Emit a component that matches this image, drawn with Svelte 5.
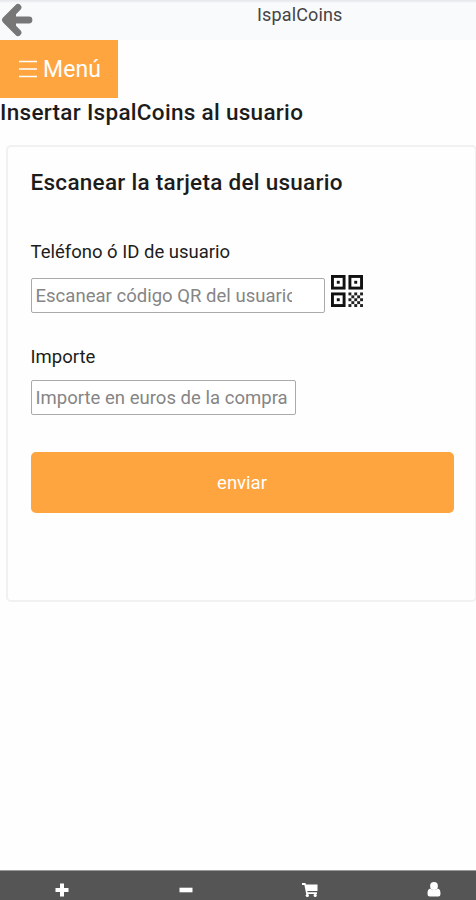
<script>
  const checks = [];
  for (let y = 0; y < 5; y++) {
    for (let x = 0; x < 5; x++) {
      if ((x + y) % 2 === 0) checks.push({ x: 18 + x * 3, y: 18 + y * 3 });
    }
  }
  const finders = [[0, 0], [18, 0], [0, 18]];
</script>

<div class="screen">
  <header>
    <svg class="back" width="34" height="40" viewBox="0 0 34 40" aria-label="Volver">
      <path d="M18 7.3 5.5 20 18 32.7M8 20H29" fill="none" stroke="#777" stroke-width="6.8" stroke-linecap="round" stroke-linejoin="round" />
      <path d="M4 20 16 8v24z" fill="#777" />
    </svg>
    <span class="brand">IspalCoins</span>
  </header>

  <button class="menu">
    <svg width="18" height="18" viewBox="0 0 18 18" aria-hidden="true">
      <path d="M0 1.5h18M0 9h18M0 16.5h18" stroke="#fff" stroke-width="1.7" />
    </svg>
    <span>Menú</span>
  </button>

  <h1>Insertar IspalCoins al usuario</h1>

  <main class="card">
    <h2>Escanear la tarjeta del usuario</h2>
    <label class="user" for="user">Teléfono ó ID de usuario</label>
    <div class="row">
      <input id="user" class="scan" placeholder="Escanear código QR del usuario" />
      <svg class="qr" width="32" height="32" viewBox="0 0 33 33" aria-label="Código QR">
        {#each finders as [x, y]}
          <rect x={x + 1.5} y={y + 1.5} width="12" height="12" fill="none" stroke="#111" stroke-width="3" />
          <rect x={x + 6} y={y + 6} width="3" height="3" fill="#111" />
        {/each}
        {#each checks as c}
          <rect x={c.x} y={c.y} width="3" height="3" fill="#222" />
        {/each}
      </svg>
    </div>
    <label class="amount" for="amount">Importe</label>
    <input id="amount" class="euros" placeholder="Importe en euros de la compra" />
    <button class="send">enviar</button>
  </main>

  <nav>
    <span><svg width="14" height="14" viewBox="0 0 14 14"><path d="M7 .5v13M.5 7h13" stroke="#fff" stroke-width="4" /></svg></span>
    <span><svg width="14" height="14" viewBox="0 0 14 14"><path d="M.5 7h13" stroke="#fff" stroke-width="4.6" /></svg></span>
    <span><svg width="16" height="14" viewBox="0 0 16 14"><path d="M0 0h3.5l.5 1.5H15.5V8H5.3l.3 1.3H15V11H4.2L2.4 2H0z" fill="#fff" /><circle cx="5.3" cy="12.4" r="1.6" fill="#fff" /><circle cx="13.2" cy="12.4" r="1.6" fill="#fff" /></svg></span>
    <span><svg width="14" height="15" viewBox="0 0 14 15"><circle cx="7" cy="4" r="3.9" fill="#fff" /><path d="M3.2 6.5C1 7 .5 9 .5 12q0 2.5 2.2 2.5h8.6q2.2 0 2.2-2.5c0-3-.5-5-2.7-5.5Q7 9.5 3.2 6.5z" fill="#fff" /></svg></span>
  </nav>
</div>

<style>
  :global(body) { background: #fff; }
  * { box-sizing: border-box; }
  .screen {
    width: 476px;
    height: 900px;
    overflow: hidden;
    display: flex;
    flex-direction: column;
    align-items: flex-start;
    background: #fefefe;
    font-family: Roboto, "Liberation Sans", sans-serif;
    color: #1c1c1c;
  }
  header {
    width: 100%;
    height: 40px;
    flex: none;
    display: flex;
    background: linear-gradient(#e7e8ec 0, #e9eaee 1px, #f9fafc 3px, #f9fafc 100%);
  }
  .back { flex: none; }
  .brand {
    margin-left: 223px;
    margin-top: 4px;
    font-size: 18px;
    line-height: 22px;
    letter-spacing: 0.15px;
    color: #444;
  }
  button { border: 0; padding: 0; font-family: inherit; color: #fff; background: #ffa540; }
  .menu {
    flex: none;
    width: 118px;
    height: 58px;
    padding-left: 19px;
    display: flex;
    align-items: center;
    gap: 6px;
    font-size: 23px;
    letter-spacing: 0.1px;
  }
  h1, h2 { margin: 0; font-weight: 500; white-space: nowrap; }
  h1 { flex: none; font-size: 22.5px; line-height: 28px; letter-spacing: 0.3px; }
  .card {
    flex: none;
    width: 471px;
    height: 457px;
    margin: 19px 0 0 6px;
    padding: 21px 22.5px 0;
    border: 2px solid #f1f1f1;
    border-radius: 5px;
    display: flex;
    flex-direction: column;
    align-items: flex-start;
  }
  h2 { font-size: 22.5px; line-height: 28px; letter-spacing: 0.28px; }
  label { font-size: 18.5px; line-height: 24px; letter-spacing: 0; }
  .user { margin-top: 44px; }
  .row { display: flex; margin-top: 14px; gap: 6px; align-items: flex-start; }
  .qr { margin-top: -3px; }
  input {
    height: 35px;
    margin: 0;
    padding: 0 4px;
    border: 1.5px solid #aaa;
    border-radius: 2px;
    background: #fff;
    font-family: inherit;
    font-size: 18.5px;
    letter-spacing: 0.02px;
  }
  input::placeholder { color: #858585; opacity: 1; }
  .scan { width: 294px; padding-right: 32px; }
  .amount { margin-top: 32px; }
  .euros { width: 265px; margin-top: 11px; }
  .send {
    width: 423px;
    height: 61px;
    margin-top: 37px;
    border-radius: 5px;
    font-size: 18.5px;
    letter-spacing: 0;
  }
  nav {
    width: 496px;
    height: 30px;
    flex: none;
    margin-top: auto;
    display: flex;
    border-top: 1px solid #999;
    background: #555;
  }
  nav span { width: 124px; display: flex; justify-content: center; align-items: center; padding-top: 8px; }
</style>
